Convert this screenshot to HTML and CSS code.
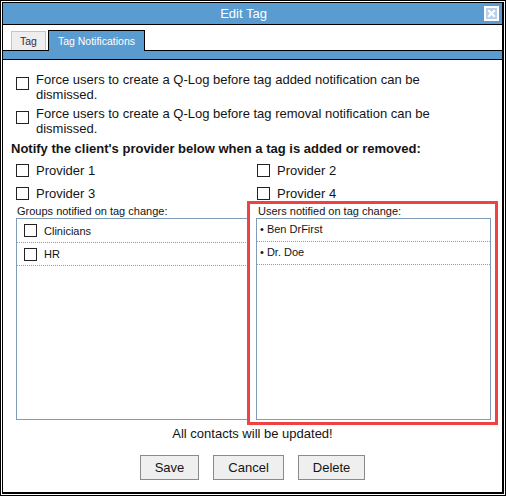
FILE: index.html
```html
<!DOCTYPE html>
<html>
<head>
<meta charset="utf-8">
<title>Edit Tag</title>
<link rel="stylesheet" href="styles.css">
</head>
<body>
<div class="dialog">
  <div class="inner">
    <div class="titlebar">
      <div class="title">Edit Tag</div>
      <div class="close">
        <svg width="15" height="15" viewBox="0 0 15 15">
          <rect x="1" y="1" width="13" height="13" fill="#b9cfec" stroke="#ffffff" stroke-width="2"/>
          <path d="M5 5 L10 10 M10 5 L5 10" stroke="#ffffff" stroke-width="2.2" stroke-linecap="square"/>
        </svg>
      </div>
    </div>
    <div class="tabs">
      <div class="tab">Tag</div>
      <div class="tab active">Tag Notifications</div>
    </div>
    <div class="strip"></div>
    <div class="content">
      <label class="opt"><span class="cb"></span><span class="txt">Force users to create a Q-Log before tag added notification can be dismissed.</span></label>
      <label class="opt"><span class="cb"></span><span class="txt">Force users to create a Q-Log before tag removal notification can be dismissed.</span></label>
      <div class="heading">Notify the client's provider below when a tag is added or removed:</div>
      <div class="providers">
        <label class="prov"><span class="cb"></span><span>Provider 1</span></label>
        <label class="prov right"><span class="cb"></span><span>Provider 2</span></label>
        <label class="prov"><span class="cb"></span><span>Provider 3</span></label>
        <label class="prov right"><span class="cb"></span><span>Provider 4</span></label>
      </div>
      <div class="lists">
        <div class="col">
          <div class="lbl">Groups notified on tag change:</div>
          <div class="box">
            <div class="grow"><span class="cb"></span><span>Clinicians</span></div>
            <div class="grow"><span class="cb"></span><span>HR</span></div>
          </div>
        </div>
        <div class="col users">
          <div class="lbl">Users notified on tag change:</div>
          <div class="box">
            <div class="urow">&bull; Ben DrFirst</div>
            <div class="urow">&bull; Dr. Doe</div>
          </div>
        </div>
      </div>
      <div class="note">All contacts will be updated!</div>
      <div class="buttons">
        <button class="btn">Save</button>
        <button class="btn">Cancel</button>
        <button class="btn">Delete</button>
      </div>
    </div>
  </div>
</div>
<div class="highlight"></div>
</body>
</html>
```

FILE: styles.css
```css
* { box-sizing: border-box; }
html, body { margin: 0; padding: 0; background: #fff; }
body {
  font-family: "Liberation Sans", Arial, sans-serif;
  color: #141414;
  width: 506px;
  height: 496px;
  position: relative;
}
.dialog {
  width: 506px;
  height: 496px;
  border: 1px solid #000;
  padding: 1px;
  background: #fff;
}
.inner {
  height: 100%;
  border: 1px solid #000;
  border-right-width: 2px;
  border-bottom-width: 2px;
  display: flex;
  flex-direction: column;
}
.titlebar {
  height: 22px;
  background: #5a9bd0;
  border-bottom: 1px solid #000;
  display: flex;
  align-items: center;
}
.title {
  flex: 1;
  text-align: center;
  color: #fff;
  font-size: 13px;
  line-height: 15px;
}
.close {
  width: 15px;
  height: 15px;
  margin-right: 3px;
  display: flex;
}
.tabs {
  height: 25px;
  display: flex;
  align-items: flex-end;
  padding-left: 8px;
  gap: 2px;
  position: relative;
  z-index: 1;
}
.tab {
  font-size: 10.5px;
  line-height: 18px;
  height: 19px;
  padding: 0 8px;
  background: #eeeeee;
  border: 1px solid #c4c4c4;
  border-bottom: none;
  color: #3a2a3a;
}
.tab.active {
  height: 21px;
  line-height: 20px;
  padding: 0 9px;
  background: #5a9bd0;
  border: 1px solid #000;
  border-bottom: none;
  color: #fff;
  margin-bottom: -1px;
  margin-left: 0;
}
.strip {
  height: 10px;
  background: #5a9bd0;
  border-top: 1px solid #000;
  border-bottom: 1px solid #000;
}
.content {
  flex: 1;
  padding: 12px 11px 0 13px;
  font-size: 13px;
}
.cb {
  display: inline-block;
  flex: none;
  width: 13px;
  height: 13px;
  border: 1px solid #222;
  background: #fff;
}
.opt {
  display: flex;
  gap: 7px;
  line-height: 15px;
}
.opt .txt { max-width: 412px; }
.opt .cb { margin-top: 5px; }
.opt + .opt { margin-top: 4px; }
.heading {
  font-weight: bold;
  line-height: 15px;
  margin: 5px 0 3px -5px;
}
.providers {
  display: grid;
  grid-template-columns: 240px 1fr;
  grid-auto-rows: 23px;
}
.prov {
  display: flex;
  align-items: center;
  gap: 7px;
  line-height: 15px;
}
.prov.right { padding-left: 1px; }
.lists {
  display: grid;
  grid-template-columns: 233px 235px;
  column-gap: 7px;
}
.lbl {
  font-size: 11px;
  line-height: 13px;
  padding-left: 1px;
}
.users .lbl { padding-left: 2px; }
.box {
  height: 202px;
  border: 1px solid #7f9db9;
}
.grow {
  height: 24px;
  display: flex;
  align-items: center;
  gap: 7px;
  padding-left: 7px;
  font-size: 11px;
  border-bottom: 1px dotted #9a9a9a;
}
.grow + .grow { height: 23px; }
.urow {
  height: 23px;
  padding: 4px 0 0 3px;
  font-size: 11px;
  line-height: 13px;
  border-bottom: 1px dotted #9a9a9a;
}
.note {
  text-align: center;
  line-height: 15px;
  margin: 6px 0 0 -11px;
  margin-right: -9px;
}
.buttons {
  display: flex;
  justify-content: center;
  gap: 14px;
  margin: 14px -9px 0 -11px;
}
.btn {
  height: 25px;
  padding: 0 14px;
  border: 1px solid #8a8a8a;
  background: #efefef;
  font-family: "Liberation Sans", Arial, sans-serif;
  font-size: 13px;
  color: #141414;
  border-radius: 0;
}
.highlight {
  position: absolute;
  left: 247px;
  top: 201px;
  width: 251px;
  height: 224px;
  border: 3px solid #ef4343;
  pointer-events: none;
}
```
